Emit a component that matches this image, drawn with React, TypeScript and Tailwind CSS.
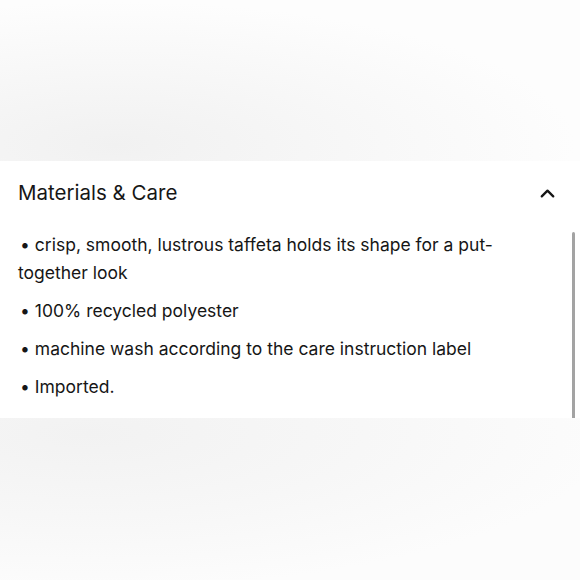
import { ChevronUp } from "lucide-react";

const items = [
  "crisp, smooth, lustrous taffeta holds its shape for a put-together look",
  "100% recycled polyester",
  "machine wash according to the care instruction label",
  "Imported.",
];

export default function App() {
  return (
    <div className="w-[580px] h-[580px] flex flex-col bg-white overflow-hidden font-['Inter',sans-serif] text-[#161616]">
      {/* blurred page above */}
      <div className="h-[161px] shrink-0 bg-[radial-gradient(ellipse_at_20%_90%,#f1f1f1_0%,#f7f7f7_35%,#fdfdfd_70%)]" />

      {/* Materials & Care panel */}
      <div className="relative h-[257px] shrink-0 bg-white">
        <div className="h-[64px] flex items-center justify-between pl-[18px] pr-[21px]">
          <h2 className="text-[20.5px] leading-[28px]">Materials &amp; Care</h2>
          <ChevronUp className="w-[23px] h-[23px]" strokeWidth={2.4} />
        </div>
        <div className="flex flex-col gap-[10px] pl-[18px] pr-[60px] mt-[6px]">
          {items.map((item) => (
            <p key={item} className="text-[17.5px] leading-[28px]">
              <span className="inline-block pl-[2px] pr-[5px]">•</span>
              {item}
            </p>
          ))}
        </div>
        <div className="absolute right-[5px] top-[71px] bottom-0 w-[3px] rounded-t-full bg-[#a3a3a3]" />
      </div>

      {/* blurred page below */}
      <div className="flex-1 bg-[radial-gradient(ellipse_at_15%_10%,#f2f2f2_0%,#f7f7f7_40%,#fcfcfc_75%)]" />
    </div>
  );
}
